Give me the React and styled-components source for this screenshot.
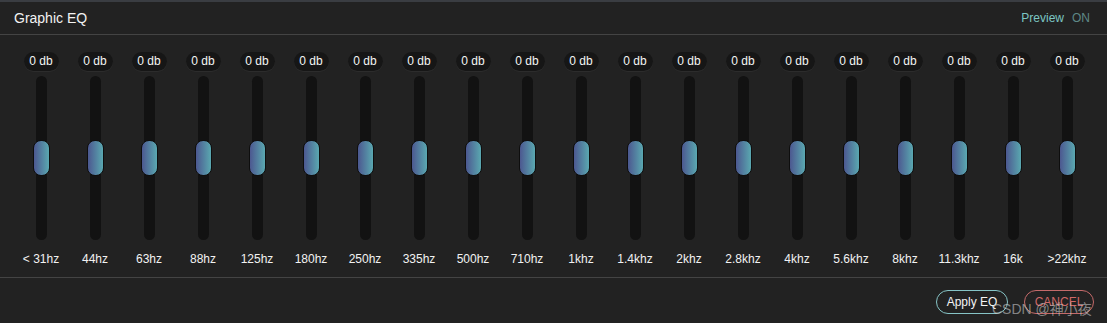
import React from 'react';
import styled, { createGlobalStyle } from 'styled-components';

const bands = [
  '< 31hz', '44hz', '63hz', '88hz', '125hz', '180hz', '250hz', '335hz', '500hz', '710hz',
  '1khz', '1.4khz', '2khz', '2.8khz', '4khz', '5.6khz', '8khz', '11.3khz', '16k', '>22khz'
];

const GlobalStyle = createGlobalStyle`
  body {
    margin: 0;
    background: #222222;
    font-family: "Liberation Sans", Arial, sans-serif;
  }
`;

const Panel = styled.div`
  position: relative;
  width: 1107px;
  height: 323px;
  background: #222222;
  border-top: 2px solid #3a3d42;
  box-sizing: border-box;
  color: #fff;
`;

const Header = styled.div`
  height: 32px;
  display: flex;
  align-items: center;
  justify-content: space-between;
  padding: 0 17px 0 14px;
  border-bottom: 1px solid #444;
`;

const Title = styled.div`
  font-size: 14px;
  color: #f2f2f2;
`;

const PreviewToggle = styled.div`
  font-size: 12px;
  display: flex;
  gap: 8px;
  color: #7cc6c3;
`;

const State = styled.span`
  color: #5e8886;
`;

const Bands = styled.div`
  display: flex;
  padding: 17px 13px 0 14px;
  height: 243px;
  box-sizing: border-box;
  border-bottom: 1px solid #444;
`;

const Band = styled.div`
  width: 54px;
  display: flex;
  flex-direction: column;
  align-items: center;
`;

const Gain = styled.div`
  width: 35px;
  height: 19px;
  border-radius: 10px;
  background: #161616;
  box-shadow: 0 1px 0 #2c2c2c;
  font-size: 12px;
  line-height: 19px;
  text-align: center;
  color: #f4f4f4;
`;

const Track = styled.div`
  margin-top: 5px;
  width: 11px;
  height: 164px;
  border-radius: 6px;
  background: #121212;
  display: flex;
  align-items: center;
  justify-content: center;
`;

const Thumb = styled.div`
  flex: none;
  width: 15px;
  height: 34px;
  border-radius: 8px;
  border: 1px solid #0e0e0e;
  background: linear-gradient(90deg, #4c5890 0%, #5aa8b0 100%);
`;

const Freq = styled.div`
  margin-top: 12px;
  font-size: 12px;
  color: #f2f2f2;
  white-space: nowrap;
`;

const Footer = styled.div`
  display: flex;
  justify-content: flex-end;
  gap: 16px;
  padding: 12px 13px 0 0;
`;

const Button = styled.button`
  height: 24px;
  width: ${(props) => props.width}px;
  border-radius: 12px;
  background: transparent;
  border: 1px solid ${(props) => props.border};
  color: ${(props) => props.color};
  font-family: "Liberation Sans", Arial, sans-serif;
  font-size: 12px;
  padding: 0;
`;

const Watermark = styled.div`
  position: absolute;
  left: 992px;
  top: 296px;
  font-size: 14px;
  color: rgba(220, 220, 220, 0.55);
  font-family: "Liberation Sans", "Noto Sans CJK SC", sans-serif;
  white-space: nowrap;
`;

const App = () => {
  return (
    <Panel>
      <GlobalStyle />
      <Header>
        <Title>Graphic EQ</Title>
        <PreviewToggle>
          <span>Preview</span>
          <State>ON</State>
        </PreviewToggle>
      </Header>
      <Bands>
        {bands.map((label) => (
          <Band key={label}>
            <Gain>0 db</Gain>
            <Track>
              <Thumb />
            </Track>
            <Freq>{label}</Freq>
          </Band>
        ))}
      </Bands>
      <Footer>
        <Button width={72} border="#86c4c6" color="#f4f4f4">Apply EQ</Button>
        <Button width={70} border="#c46a6a" color="#d06868">CANCEL</Button>
      </Footer>
      <Watermark>CSDN @神小夜</Watermark>
    </Panel>
  );
};

export default App;
